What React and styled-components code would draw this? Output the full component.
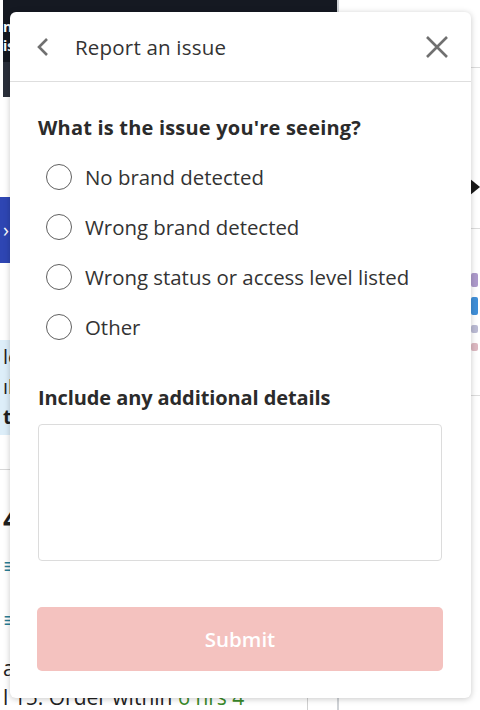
import React from "react";
import styled, { createGlobalStyle } from "styled-components";

const GlobalStyle = createGlobalStyle`
  * { box-sizing: border-box; }
  html, body {
    margin: 0;
    padding: 0;
    background: #fff;
    font-family: "Open Sans", "Lato", sans-serif;
  }
`;

const Page = styled.div`
  position: relative;
  width: 480px;
  height: 710px;
  overflow: hidden;
  display: grid;
  grid-template-columns: 337px 1fr;
  background: #fff;
`;

/* background page (mostly hidden behind the dialog) */
const MainColumn = styled.div`
  display: flex;
  flex-direction: column;
  padding-left: 3px;
  color: #1f1f1f;
`;

const TopBar = styled.div`
  height: 62px;
  background: #151922;
  color: #fff;
  font-weight: 700;
  font-size: 14px;
  line-height: 19px;
  padding-top: 17px;
`;

const SubBar = styled.div`
  height: 35px;
  background: #2a2f3a;
`;

const Band = styled.div`
  height: ${(p) => p.$h}px;
  margin-top: ${(p) => p.$mt || 0}px;
  margin-left: -3px;
  padding-left: 3px;
  background: ${(p) => p.$bg};
  color: ${(p) => p.$color || "#1f1f1f"};
  display: flex;
  flex-direction: column;
  justify-content: ${(p) => (p.$center ? "center" : "flex-start")};
  padding-top: ${(p) => p.$pt || 0}px;
  font-size: ${(p) => p.$fs || 18}px;
  line-height: 30px;
`;

const Rule = styled.hr`
  margin: 34px 0 0 -3px;
  border: none;
  border-top: 1px solid #d8d8d8;
`;

const BigNumber = styled.div`
  margin-top: 34px;
  font-size: 30px;
  font-weight: 700;
  line-height: 30px;
`;

const TealLink = styled.div`
  margin-top: ${(p) => p.$mt}px;
  color: #2a7d95;
  font-size: 22px;
  line-height: 22px;
`;

const BodyLine = styled.div`
  margin-top: ${(p) => p.$mt}px;
  font-size: 21px;
  line-height: 24px;
  color: #222;
  white-space: nowrap;
`;

const Green = styled.span`
  color: #3a8a2a;
`;

const BottomRow = styled.div`
  display: grid;
  grid-template-columns: 304px 1fr;
  margin-top: -12px;
  height: 40px;
`;

const BottomCell = styled.div`
  border-left: 1px solid #d0d0d0;
`;

const SideColumn = styled.div`
  border-left: 2px solid #cfd2d6;
  display: flex;
  flex-direction: column;
`;

const SideRow = styled.div`
  height: ${(p) => p.$h}px;
  border-bottom: 1px solid #dcdcdc;
  display: flex;
  align-items: ${(p) => p.$align || "center"};
  justify-content: flex-end;
  padding-bottom: ${(p) => p.$pb || 0}px;
`;

const Thumbs = styled.div`
  display: flex;
  flex-direction: column;
  align-items: flex-end;
  gap: 10px;
  padding-right: 2px;
  width: 100%;
`;

const Thumb = styled.div`
  width: 7px;
  height: ${(p) => p.$h}px;
  background: ${(p) => p.$bg};
  opacity: ${(p) => p.$o || 1};
  border-radius: 2px;
`;

/* dialog */
const Dialog = styled.div`
  position: absolute;
  top: 12px;
  left: 10px;
  width: 461px;
  height: 686px;
  background: #fff;
  border-radius: 6px;
  box-shadow: 0 1px 6px rgba(0, 0, 0, 0.22);
  display: flex;
  flex-direction: column;
  color: #333;
`;

const DialogHeader = styled.div`
  height: 70px;
  border-bottom: 1px solid #dedede;
  display: flex;
  align-items: center;
  padding: 0 22px 0 26px;
`;

const IconButton = styled.button`
  border: none;
  background: none;
  padding: 0;
  display: flex;
  align-items: center;
  justify-content: center;
  cursor: pointer;
  color: #707070;
`;

const Title = styled.h2`
  flex: 1;
  margin: 0 0 0 25px;
  font-size: 20.5px;
  font-weight: 500;
  color: #333;
  letter-spacing: 0.2px;
`;

const DialogBody = styled.div`
  padding: 34px 28px 27px 28px;
  display: flex;
  flex-direction: column;
  flex: 1;
`;

const Question = styled.div`
  font-size: 20px;
  line-height: 24px;
  font-weight: 700;
  color: #2b2b2b;
  letter-spacing: ${(p) => p.$ls || "0.2px"};
`;

const Options = styled.div`
  margin-top: 12px;
  display: flex;
  flex-direction: column;
`;

const Option = styled.label`
  height: 50px;
  display: flex;
  align-items: center;
  gap: 13px;
  padding-left: 8px;
  font-size: 20.4px;
  color: #333;
  cursor: pointer;
`;

const RadioCircle = styled.span`
  width: 26px;
  height: 26px;
  border-radius: 50%;
  border: 1.5px solid #5f5f5f;
  flex-shrink: 0;
`;

const DetailsLabel = styled(Question)`
  margin-top: 34px;
`;

const TextArea = styled.textarea`
  margin-top: 14px;
  width: 404px;
  height: 137px;
  border: 1px solid #dcdcdc;
  border-radius: 4px;
  resize: none;
  font-family: inherit;
  font-size: 18px;
  padding: 10px;
`;

const SubmitButton = styled.button`
  margin-top: auto;
  margin-left: -1px;
  width: 406px;
  height: 64px;
  border: none;
  border-radius: 5px;
  background: #f4c2bf;
  color: #fff;
  font-family: inherit;
  font-size: 20.5px;
  font-weight: 600;
`;

const options = [
  "No brand detected",
  "Wrong brand detected",
  "Wrong status or access level listed",
  "Other",
];

export default function App() {
  return (
    <>
      <GlobalStyle />
      <Page>
        <MainColumn>
          <TopBar>
            <div>n</div>
            <div>is</div>
          </TopBar>
          <SubBar />
          <Band $h={66} $mt={100} $bg="#2e46b3" $color="#fff" $center $fs={20}>
            ›
          </Band>
          <Band $h={95} $mt={77} $bg="#ddeef9" $pt={2} $fs={20}>
            <div>lc</div>
            <div>ıl</div>
            <div style={{ fontWeight: 700 }}>t</div>
          </Band>
          <Rule />
          <BigNumber>4</BigNumber>
          <TealLink $mt={20}>≡</TealLink>
          <TealLink $mt={32}>≡</TealLink>
          <BodyLine $mt={26}>a</BodyLine>
          <BodyLine $mt={5}>
            l 15. Order within <Green>6 hrs 4</Green>
          </BodyLine>
          <BottomRow>
            <div />
            <BottomCell />
          </BottomRow>
        </MainColumn>
        <SideColumn>
          <SideRow $h={68} />
          <SideRow $h={161} $align="flex-end" $pb={28}>
            <svg width="16" height="26" viewBox="0 0 16 26">
              <polygon points="0,0 16,13 0,26" fill="#1a1a1a" />
            </svg>
          </SideRow>
          <SideRow $h={167}>
            <Thumbs>
              <Thumb $h={14} $bg="#8a6fb5" $o={0.7} />
              <Thumb $h={18} $bg="#3f8fd8" />
              <Thumb $h={8} $bg="#8e8eb8" $o={0.6} />
              <Thumb $h={8} $bg="#c78a9a" $o={0.6} />
            </Thumbs>
          </SideRow>
        </SideColumn>

        <Dialog role="dialog" aria-label="Report an issue">
          <DialogHeader>
            <IconButton aria-label="Back">
              <svg width="14" height="20" viewBox="0 0 14 20" fill="none">
                <path d="M11 2 L3 10 L11 18" stroke="currentColor" strokeWidth="2.6" />
              </svg>
            </IconButton>
            <Title>Report an issue</Title>
            <IconButton aria-label="Close">
              <svg width="24" height="24" viewBox="0 0 24 24" fill="none">
                <path d="M2 2 L22 22 M22 2 L2 22" stroke="currentColor" strokeWidth="2.6" />
              </svg>
            </IconButton>
          </DialogHeader>
          <DialogBody>
            <Question>What is the issue you're seeing?</Question>
            <Options>
              {options.map((o) => (
                <Option key={o}>
                  <RadioCircle />
                  {o}
                </Option>
              ))}
            </Options>
            <DetailsLabel $ls="-0.1px">Include any additional details</DetailsLabel>
            <TextArea />
            <SubmitButton>Submit</SubmitButton>
          </DialogBody>
        </Dialog>
      </Page>
    </>
  );
}
